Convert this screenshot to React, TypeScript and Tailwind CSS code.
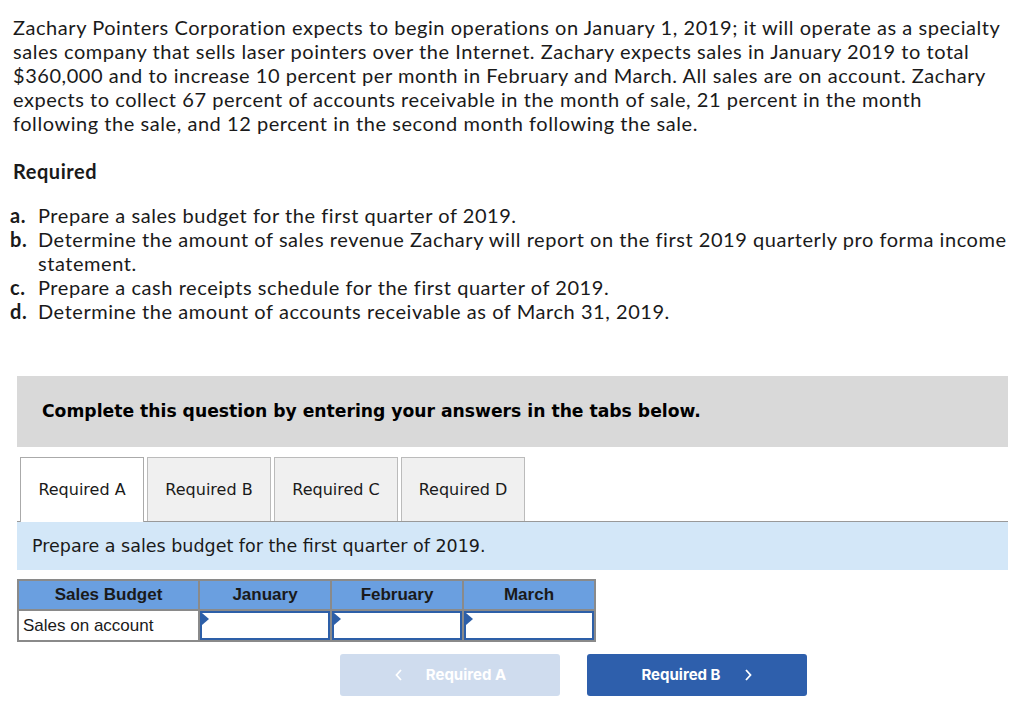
import React from "react";

const Tri = () => (
  <span className="absolute left-0 top-0 w-0 h-0 border-t-[6px] border-b-[6px] border-l-[7px] border-t-transparent border-b-transparent border-l-[#2d5fa8]" />
);

export default function App() {
  const tabs = ["Required A", "Required B", "Required C", "Required D"];
  return (
    <div className="w-[1024px] h-[722px] bg-white text-[#1a1a1a] overflow-hidden">
      <div className="pl-[13px] pr-[10px] pt-[15px] font-['Lato',sans-serif] text-[20px] tracking-[0.55px] leading-[24px] whitespace-nowrap">
        <p>
          Zachary Pointers Corporation expects to begin operations on January 1, 2019; it will operate as a specialty
          <br />
          sales company that sells laser pointers over the Internet. Zachary expects sales in January 2019 to total
          <br />
          $360,000 and to increase 10 percent per month in February and March. All sales are on account. Zachary
          <br />
          expects to collect 67 percent of accounts receivable in the month of sale, 21 percent in the month
          <br />
          following the sale, and 12 percent in the second month following the sale.
        </p>
        <p className="font-bold mt-[24px]">Required</p>
        <ul className="mt-[20px] -ml-[3px]">
          <li className="flex">
            <span className="font-bold w-[28px] shrink-0">a.</span>
            <span>Prepare a sales budget for the first quarter of 2019.</span>
          </li>
          <li className="flex">
            <span className="font-bold w-[28px] shrink-0">b.</span>
            <span>
              Determine the amount of sales revenue Zachary will report on the first 2019 quarterly pro forma income
              <br />
              statement.
            </span>
          </li>
          <li className="flex">
            <span className="font-bold w-[28px] shrink-0">c.</span>
            <span>Prepare a cash receipts schedule for the first quarter of 2019.</span>
          </li>
          <li className="flex">
            <span className="font-bold w-[28px] shrink-0">d.</span>
            <span>Determine the amount of accounts receivable as of March 31, 2019.</span>
          </li>
        </ul>
      </div>

      <div className="mx-[17px] w-[991px] mt-[53px]">
        <div className="bg-[#d9d9d9] h-[71px] flex items-center pl-[25px] font-['DejaVu_Sans',sans-serif] font-bold text-[17.2px] text-black">
          Complete this question by entering your answers in the tabs below.
        </div>

        <div className="mt-[10px] flex items-end gap-[3px] pl-[3px] border-b border-[#999999] font-['DejaVu_Sans',sans-serif] text-[16px]">
          {tabs.map((t, i) => (
            <div
              key={t}
              className={
                i === 0
                  ? "w-[124px] h-[65px] -mb-px bg-white border border-b-0 border-[#aaaaaa] flex items-center justify-center"
                  : "w-[124px] h-[64px] bg-[#f0f0f0] border border-b-0 border-[#bbbbbb] flex items-center justify-center"
              }
            >
              {t}
            </div>
          ))}
        </div>

        <div className="bg-[#d3e7f8] h-[48px] flex items-center pl-[15px] font-['DejaVu_Sans',sans-serif] text-[17.5px]">
          Prepare a sales budget for the first quarter of 2019.
        </div>

        <table className="mt-[9px] border-collapse font-['Liberation_Sans',sans-serif] text-[17px]">
          <thead>
            <tr className="h-[30px] bg-[#6a9fe0]">
              <th className="w-[181px] border-2 border-[#8a8a8a] font-bold text-[#1a1a1a]">Sales Budget</th>
              <th className="w-[132px] border-2 border-[#8a8a8a] font-bold">January</th>
              <th className="w-[132px] border-2 border-[#8a8a8a] font-bold">February</th>
              <th className="w-[132px] border-2 border-[#8a8a8a] font-bold">March</th>
            </tr>
          </thead>
          <tbody>
            <tr className="h-[31px]">
              <td className="border-2 border-[#8a8a8a] pl-[4px] font-normal">Sales on account</td>
              {[0, 1, 2].map((i) => (
                <td key={i} className="border-2 border-[#8a8a8a] p-0">
                  <div className="relative h-[29px] border-2 border-[#2d5fa8] bg-white">
                    <Tri />
                  </div>
                </td>
              ))}
            </tr>
          </tbody>
        </table>

        <div className="mt-[12px] flex gap-[27px] pl-[323px] font-['Inter',sans-serif] font-bold text-[15px] text-white">
          <div className="w-[220px] h-[42px] rounded-[3px] bg-[#cfdcee] flex items-center justify-center gap-[22px]">
            <svg width="10" height="14" viewBox="0 0 10 14" fill="none" stroke="white" strokeWidth="1.8">
              <path d="M7 2 L2.5 7 L7 12" />
            </svg>
            <span>Required A</span>
          </div>
          <div className="w-[220px] h-[42px] rounded-[3px] bg-[#2e5fac] flex items-center justify-center gap-[22px]">
            <span>Required B</span>
            <svg width="10" height="14" viewBox="0 0 10 14" fill="none" stroke="white" strokeWidth="1.8">
              <path d="M3 2 L7.5 7 L3 12" />
            </svg>
          </div>
        </div>
      </div>
    </div>
  );
}
